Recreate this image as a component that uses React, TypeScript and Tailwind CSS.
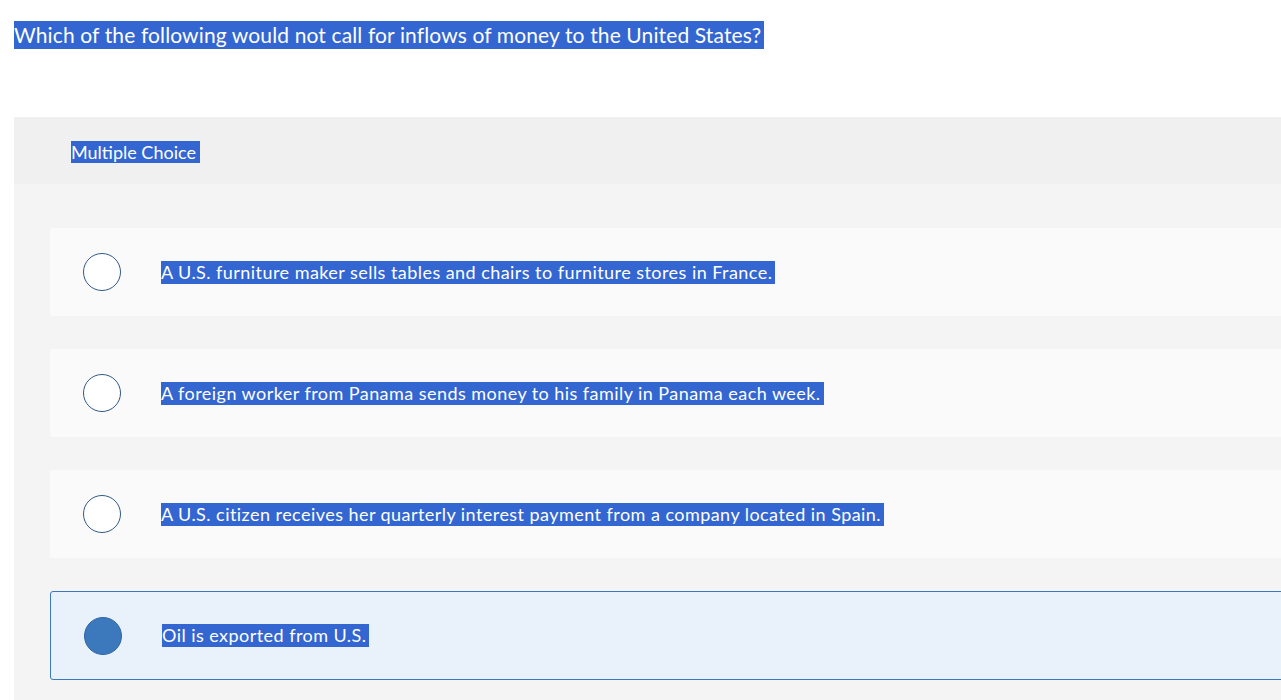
import React, { useState } from 'react';

const options = [
    'A U.S. furniture maker sells tables and chairs to furniture stores in France.',
    'A foreign worker from Panama sends money to his family in Panama each week.',
    'A U.S. citizen receives her quarterly interest payment from a company located in Spain.',
    'Oil is exported from U.S.',
];

const hl = 'bg-[#3366d1] text-white';

export default function App() {
    const [picked, setPicked] = useState(3);

    return (
        <div className="h-[700px] w-full overflow-hidden bg-white font-['Lato',sans-serif]">
            <div className="pl-[14px] pt-[21px]">
                <span className={`${hl} inline-block text-[21px] leading-[28px] tracking-[0.006em] pr-[3px]`}>
                    Which of the following would not call for inflows of money to the United States?
                </span>
            </div>

            <div className="ml-[14px] mt-[68px] w-[1400px]">
                <div className="h-[67px] bg-[#f0f0f0] pl-[57px] pt-[24px]">
                    <span className={`${hl} inline-block text-[18px] leading-[22px] pr-[4px]`}>Multiple Choice</span>
                </div>

                <div className="bg-[#f4f4f4] pl-[36px] pt-[44px] pb-[40px] flex flex-col gap-[33px]">
                    {options.map((opt, i) => {
                        const on = picked === i;
                        return (
                            <button
                                key={opt}
                                onClick={() => setPicked(i)}
                                className={`flex items-center rounded-[3px] text-left ${on ? 'h-[89px] border border-[#3b77bd] bg-[#e9f1fb]' : 'h-[88px] bg-[#fafafa]'}`}
                            >
                                <span
                                    className={`ml-[33px] h-[38px] w-[38px] shrink-0 rounded-full border-[1.5px] ${on ? 'border-[#2f66a6] bg-[#3b78bc]' : 'border-[#2f5a86] bg-white'}`}
                                />
                                <span className={`${hl} ml-[40px] inline-block text-[18px] leading-[23px] tracking-[0.025em] pr-[3px]`}>{opt}</span>
                            </button>
                        );
                    })}
                </div>
            </div>
        </div>
    );
}
